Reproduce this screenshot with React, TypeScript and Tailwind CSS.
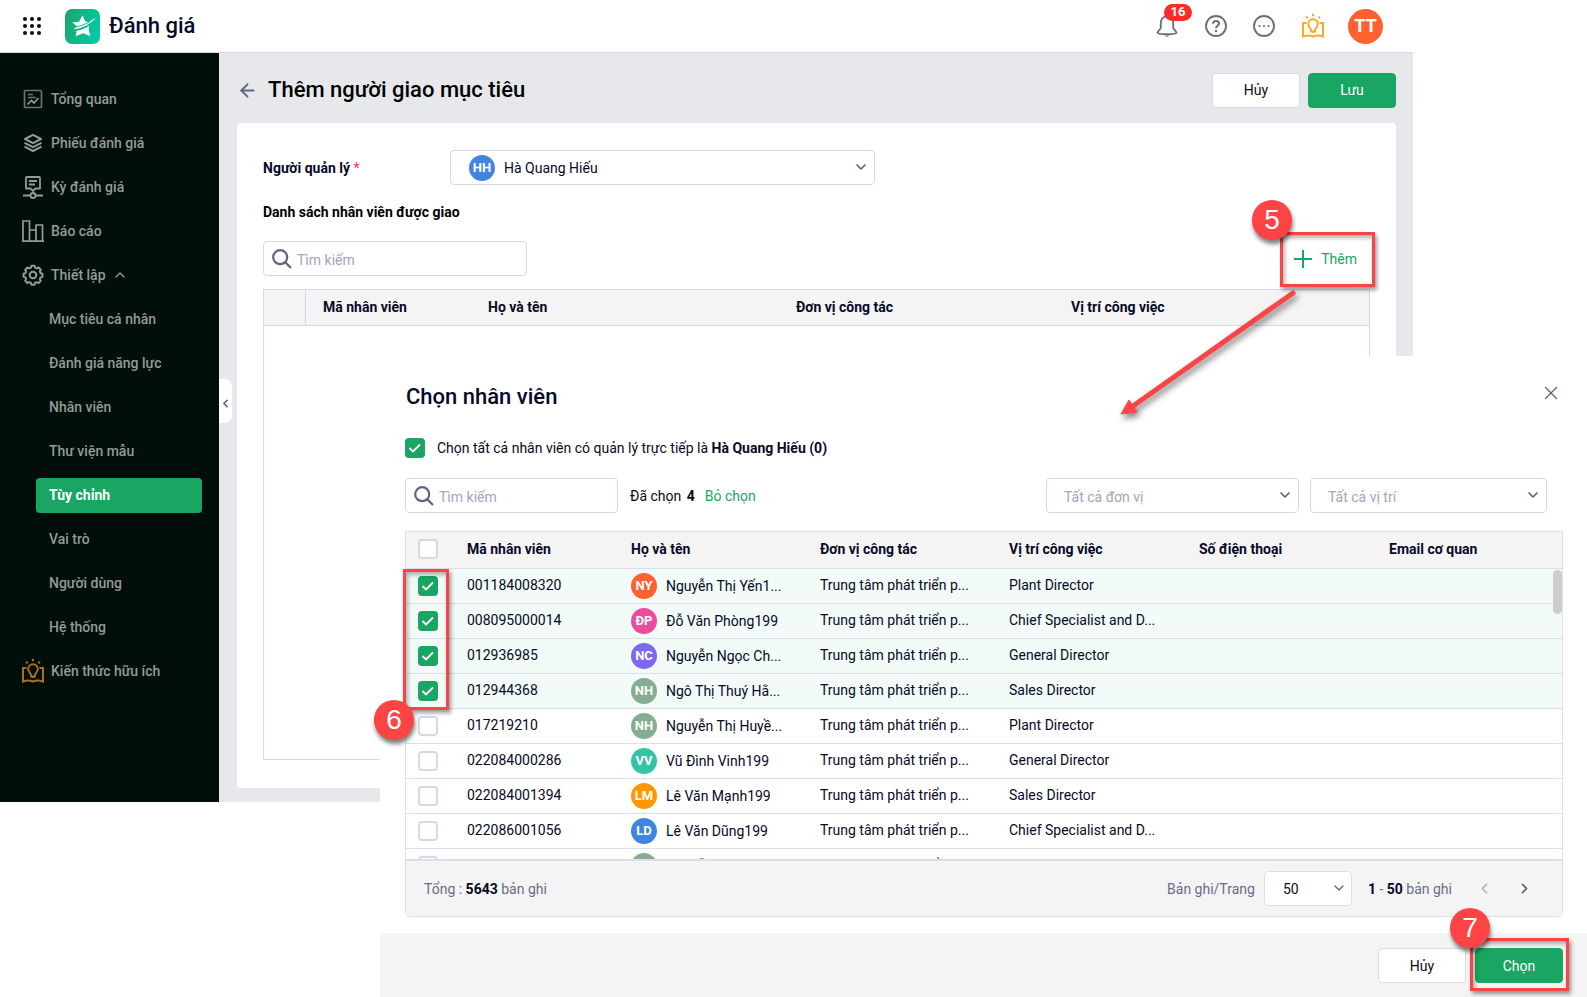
import type { ReactNode } from "react";
import { useState } from "react";
import { ArrowLeft, ChevronDown, ChevronLeft, ChevronRight, ChevronUp, X } from "lucide-react";
import clsx from "clsx";

type Employee = {
  code: string;
  name: string;
  initials: string;
  color: string;
  position: string;
};

const employees: Employee[] = [
  { code: "001184008320", name: "Nguyễn Thị Yến1...", initials: "NY", color: "bg-[#ff6230]", position: "Plant Director" },
  { code: "008095000014", name: "Đỗ Văn Phòng199", initials: "ĐP", color: "bg-[#ec4c9c]", position: "Chief Specialist and D..." },
  { code: "012936985", name: "Nguyễn Ngọc Ch...", initials: "NC", color: "bg-[#7b68ee]", position: "General Director" },
  { code: "012944368", name: "Ngô Thị Thuý Hằ...", initials: "NH", color: "bg-[#85ad93]", position: "Sales Director" },
  { code: "017219210", name: "Nguyễn Thị Huyề...", initials: "NH", color: "bg-[#85ad93]", position: "Plant Director" },
  { code: "022084000286", name: "Vũ Đình Vinh199", initials: "VV", color: "bg-[#35c3a7]", position: "General Director" },
  { code: "022084001394", name: "Lê Văn Mạnh199", initials: "LM", color: "bg-[#ff9800]", position: "Sales Director" },
  { code: "022086001056", name: "Lê Văn Dũng199", initials: "LD", color: "bg-[#4285e0]", position: "Chief Specialist and D..." },
  { code: "022086001057", name: "Nguyễn Hà199", initials: "NH", color: "bg-[#85ad93]", position: "Chief Specialist and D..." },
];

const settings = [
  "Mục tiêu cá nhân",
  "Đánh giá năng lực",
  "Nhân viên",
  "Thư viện mẫu",
  "Tùy chỉnh",
  "Vai trò",
  "Người dùng",
  "Hệ thống",
];

function AppsIcon() {
  return (
    <svg width="18" height="18" viewBox="0 0 18 18" fill="#0b0b14">
      {[2, 9, 16].map((y) => [2, 9, 16].map((x) => <circle key={`${x}-${y}`} cx={x} cy={y} r="2" />))}
    </svg>
  );
}

function Logo() {
  return (
    <svg width="35" height="35" viewBox="0 0 35 35">
      <defs>
        <linearGradient id="logo" x1="0" y1="0" x2="1" y2="0.4">
          <stop offset="0" stopColor="#1ba566" />
          <stop offset="1" stopColor="#04c8a3" />
        </linearGradient>
      </defs>
      <rect width="35" height="35" rx="7" fill="url(#logo)" />
      <path
        d="M7.3 13.300 14 12.800 17.500 6.300 20.300 12.600 23.500 12.900 31 8.800C25.500 14.800 18 19.500 8.700 20.200L12 17.500Z"
        fill="#fff"
      />
      <path d="M10.800 22C16.500 21.300 20.500 19.400 24.300 16.500L23.500 19 25.200 27 18.300 24.300 10.600 27.300 11.600 22.900Z" fill="#fff" />
      <path d="M8.500 17.900C15 17.900 21 14.800 25.500 12.200" fill="none" stroke="#12b384" strokeWidth="1" />
    </svg>
  );
}

function OverviewIcon() {
  return (
    <svg width="22" height="22" viewBox="0 0 22 22" fill="none" stroke="currentColor" strokeWidth="1.700">
      <rect x="2.500" y="2.500" width="17" height="17" rx="1" stroke="#66727e" />
      <path d="M6 6.500h5M6 9.500h8" stroke="#66727e" />
      <path d="m5.500 16.500 4-4 2.500 2.500 4.500-5" />
    </svg>
  );
}

function LayersIcon() {
  return (
    <svg width="22" height="22" viewBox="0 0 22 22" fill="none" stroke="currentColor" strokeWidth="2" strokeLinejoin="round">
      <path d="M11 2.800 19 7l-8 4.200L3 7Z" />
      <path d="m2.500 10.800 8.500 4.400 8.500-4.400M2.500 14.600l8.500 4.400 8.500-4.400" />
    </svg>
  );
}

function PeriodIcon() {
  return (
    <svg width="22" height="24" viewBox="0 0 22 24" fill="none" stroke="currentColor" strokeWidth="1.800" strokeLinejoin="round">
      <path d="M5 2h12a1 1 0 0 1 1 1v10.500h-4.500L11 16l-2.500-2.500H4V3a1 1 0 0 1 1-1Z" />
      <path d="M7 6h8M7 9.500h6M1 20.500h7M14 20.500h7" />
      <circle cx="11" cy="20.500" r="2.500" />
    </svg>
  );
}

function ReportIcon() {
  return (
    <svg width="22" height="22" viewBox="0 0 22 22" fill="none" stroke="currentColor" strokeWidth="1.700">
      <path d="M0 21.100h22M1 21V1h6.500v20M7.500 10h6.500v11M14 21V5h6.500v16" />
    </svg>
  );
}

function GearIcon() {
  return (
    <svg width="22" height="22" viewBox="0 0 24 24" fill="none" stroke="currentColor" strokeWidth="2.200" strokeLinejoin="round">
      <circle cx="12" cy="12" r="3.600" />
      <path d="M9.700 4 10.300 2h3.400l.6 2 1.900.8 1.900-1 2.400 2.400-1 1.900.8 1.900 2 .6v3.400l-2 .6-.8 1.900 1 1.900-2.400 2.400-1.900-1-1.900.8-.6 2h-3.400l-.6-2-1.900-.8-1.900 1-2.400-2.400 1-1.900-.8-1.900-2-.6v-3.400l2-.6.8-1.900-1-1.900 2.400-2.400 1.900 1Z" />
    </svg>
  );
}

function BookIcon({ className }: { className: string }) {
  return (
    <svg width="24" height="26" viewBox="0 0 24 26" fill="none" stroke="currentColor" strokeWidth="2" className={className}>
      <path d="M5.500 10H2v13.500c3-1.200 7-1.200 10 0 3-1.200 7-1.200 10 0V10h-3.500" />
      <path d="M10 17c0-1.500-2.800-2.600-2.800-6a4.800 4.800 0 0 1 9.600 0c0 3.400-2.800 4.500-2.800 6v1.500h-4Z" />
      <path d="M12 .8v2.500M5 3.800l1.700 1.500M19 3.800l-1.700 1.500M12 18v2" />
    </svg>
  );
}

function BellIcon() {
  return (
    <svg width="22" height="24" viewBox="0 0 22 24" fill="none" stroke="#6b7078" strokeWidth="1.900" strokeLinejoin="round">
      <path d="M11 2.500c-4 0-6.200 2.800-6.200 6.500v4.500c0 2-3.300 3.700-3.300 5.300 0 .9 2.500 1.500 9.500 1.500s9.500-.6 9.500-1.500c0-1.600-3.300-3.300-3.300-5.300V9c0-3.700-2.200-6.500-6.200-6.500Z" />
      <path d="M8.500 21.500c.8 1.500 4.200 1.500 5 0Z" fill="#6b7078" stroke="none" />
    </svg>
  );
}

function HelpIcon() {
  return (
    <svg width="22" height="22" viewBox="0 0 22 22" fill="none" stroke="#6b7078" strokeWidth="1.900">
      <circle cx="11" cy="11" r="10" />
      <path d="M8 8.800c0-1.700 1.300-2.800 3-2.800s3 1 3 2.600c0 2.100-3 2.100-3 4.600" strokeWidth="2" />
      <circle cx="11" cy="16" r="1.200" fill="#6b7078" stroke="none" />
    </svg>
  );
}

function MoreIcon() {
  return (
    <svg width="22" height="22" viewBox="0 0 22 22" fill="#6b7078">
      <circle cx="11" cy="11" r="10" fill="none" stroke="#6b7078" strokeWidth="1.900" />
      <circle cx="6.500" cy="11" r="1.100" />
      <circle cx="11" cy="11" r="1.100" />
      <circle cx="15.500" cy="11" r="1.100" />
    </svg>
  );
}

function SearchIcon() {
  return (
    <svg width="20" height="20" viewBox="0 0 20 20" fill="none" stroke="#5f6481" strokeWidth="2.200" className="shrink-0">
      <circle cx="8.200" cy="8.200" r="7" />
      <path d="m13 13 6 6" />
    </svg>
  );
}

function Avatar({ initials, color }: { initials: string; color: string }) {
  return (
    <span className={clsx("flex size-[26px] shrink-0 items-center justify-center rounded-full text-[13px] font-bold text-white", color)}>
      {initials}
    </span>
  );
}

function SearchBox({ label, className }: { label: string; className: string }) {
  return (
    <label className={clsx("flex h-[35px] items-center gap-[5px] rounded border border-[#d5d8e6] bg-white px-2", className)}>
      <SearchIcon />
      <input
        type="text"
        aria-label={label}
        placeholder="Tìm kiếm"
        className="w-full min-w-0 pt-0.5 outline-none placeholder:text-[#a2a6bd]"
      />
    </label>
  );
}

function Select({ label, className, children }: { label: string; className: string; children: ReactNode }) {
  return (
    <div className={clsx("relative", className)}>
      <select aria-label={label} className="h-[35px] w-full appearance-none rounded border border-[#d5d8e6] bg-white pl-[17px] pr-8 pt-0.5 outline-none">
        {children}
      </select>
      <ChevronDown size={16} strokeWidth={2.500} className="pointer-events-none absolute right-1.5 top-[9px] text-[#5f6481]" />
    </div>
  );
}

function Checkbox({ label, checked, onChange }: { label: string; checked: boolean; onChange?: () => void }) {
  return (
    <span className="relative block size-5 shrink-0">
      <input
        type="checkbox"
        aria-label={label}
        checked={checked}
        onChange={() => onChange?.()}
        className="block size-5 appearance-none rounded border-2 border-[#d5d8e6] bg-white checked:border-[#19a562] checked:bg-[#19a562]"
      />
      {checked && (
        <svg viewBox="0 0 20 20" fill="none" stroke="#fff" strokeWidth="1.800" className="pointer-events-none absolute inset-0">
          <path d="m4.500 10 3.500 3.500L15 6.500" />
        </svg>
      )}
    </span>
  );
}

function Button({ primary, children }: { primary?: boolean; children: ReactNode }) {
  return (
    <button
      type="button"
      className={clsx(
        "h-[35px] w-[88px] rounded border",
        primary ? "border-[#19a562] bg-[#19a562] text-white" : "border-[#dcdde2] bg-white text-[#0b0b14]",
      )}
    >
      {children}
    </button>
  );
}

function StepBadge({ step, className }: { step: number; className: string }) {
  return (
    <span className={clsx("absolute z-30 flex size-10 items-center justify-center rounded-full bg-[#fd4444] font-['Liberation_Sans'] text-[28px] text-white shadow-[1px_4px_4px_rgba(0,0,0,0.5)]", className)}>
      {step}
    </span>
  );
}

// Red frame around the element that a step points at
function StepFrame({ className }: { className: string }) {
  return (
    <span className={clsx("pointer-events-none absolute z-20 border-[3px] border-[#fd4444] shadow-[2px_3px_4px_rgba(0,0,0,0.4),inset_2px_3px_4px_rgba(0,0,0,0.3)]", className)} />
  );
}

function NavItem({ icon, children }: { icon: ReactNode; children: ReactNode }) {
  return (
    <a href="#" className="flex h-11 items-center gap-1.5 pl-[21px]">
      <span className="flex w-6 justify-center">{icon}</span>
      {children}
    </a>
  );
}

function Header() {
  return (
    <header className="flex h-[53px] items-center border-b border-[#d3d8e8] bg-white pl-[23px] pr-[30px]">
      <button type="button" aria-label="Ứng dụng">
        <AppsIcon />
      </button>
      <div className="ml-6 flex items-center gap-[9px]">
        <Logo />
        <span className="text-[22px] font-medium">Đánh giá</span>
      </div>
      <div className="ml-auto flex items-center">
        <button type="button" aria-label="Thông báo" className="relative">
          <BellIcon />
          <span className="absolute -top-[10px] left-2 flex h-[17px] w-7 items-center justify-center rounded-full bg-[#ff2a2a] text-[13px] font-bold text-white">
            16
          </span>
        </button>
        <button type="button" aria-label="Trợ giúp" className="ml-[27px]">
          <HelpIcon />
        </button>
        <button type="button" aria-label="Thêm nữa" className="ml-[26px]">
          <MoreIcon />
        </button>
        <button type="button" aria-label="Kiến thức" className="ml-[26px]">
          <BookIcon className="text-[#fda92b]" />
        </button>
        <span className="ml-[23px] flex size-[35px] items-center justify-center rounded-full bg-[#ff6230] text-lg font-bold text-white">
          TT
        </span>
      </div>
    </header>
  );
}

function Sidebar() {
  return (
    <nav className="relative w-[219px] shrink-0 bg-[#010e09] pb-[108px] pt-6 font-medium text-[#949a97]">
      <NavItem icon={<OverviewIcon />}>Tổng quan</NavItem>
      <NavItem icon={<LayersIcon />}>Phiếu đánh giá</NavItem>
      <NavItem icon={<PeriodIcon />}>Kỳ đánh giá</NavItem>
      <NavItem icon={<ReportIcon />}>Báo cáo</NavItem>
      <NavItem icon={<GearIcon />}>
        Thiết lập
        <ChevronUp size={16} strokeWidth={2} />
      </NavItem>
      {settings.map((item) => (
        <div key={item} className="flex h-11 items-center pl-9 pr-[17px]">
          <a
            href="#"
            className={clsx("flex h-[35px] w-full items-center rounded pl-[13px]", item === "Tùy chỉnh" && "bg-[#19a562] font-bold text-white")}
          >
            {item}
          </a>
        </div>
      ))}
      <NavItem icon={<BookIcon className="text-[#a86f1c]" />}>Kiến thức hữu ích</NavItem>
      <button
        type="button"
        aria-label="Thu gọn"
        className="absolute -right-[13px] top-[326px] flex h-11 w-[13px] items-center justify-center rounded-r-lg bg-white pt-1 text-[#5f6481]"
      >
        <ChevronLeft size={13} strokeWidth={3} />
      </button>
    </nav>
  );
}

function GoalForm() {
  return (
    <main className="min-w-0 flex-1 bg-[#e7e8ec] pb-3.5 pl-[18px] pr-[17px]">
      <div className="flex h-[70px] items-center pt-1">
        <button type="button" aria-label="Quay lại" className="text-[#5f6481]">
          <ArrowLeft size={21} strokeWidth={2.200} />
        </button>
        <h1 className="ml-2.5 text-[22px] font-medium text-black">Thêm người giao mục tiêu</h1>
        <div className="ml-auto flex gap-2">
          <Button>Hủy</Button>
          <Button primary>Lưu</Button>
        </div>
      </div>

      <div className="rounded bg-white px-[26px] pb-7 pt-[27px]">
        <div className="flex items-center">
          <label htmlFor="manager" className="w-[187px] font-bold">
            Người quản lý <span className="font-normal text-[#f0384b]">*</span>
          </label>
          <div className="relative w-[425px]">
            <select id="manager" className="h-[35px] w-full appearance-none rounded border border-[#d5d8e6] bg-white pl-[53px] outline-none">
              <option>Hà Quang Hiếu</option>
            </select>
            <span className="pointer-events-none absolute left-[19px] top-[5px]">
              <Avatar initials="HH" color="bg-[#4285e0]" />
            </span>
            <ChevronDown size={16} strokeWidth={2.500} className="pointer-events-none absolute right-1.5 top-[9px] text-[#5f6481]" />
          </div>
        </div>

        <h2 className="mt-[17px] font-bold text-black">Danh sách nhân viên được giao</h2>

        <div className="mt-[19px] flex items-center justify-between">
          <SearchBox label="Tìm nhân viên được giao" className="w-[264px]" />
          <div className="relative">
            <button type="button" className="flex h-[35px] items-center gap-[9px] pr-[13px] text-[#19a562]">
              <svg width="18" height="18" viewBox="0 0 18 18" stroke="currentColor" strokeWidth="2">
                <path d="M9 0v18M0 9h18" />
              </svg>
              Thêm
            </button>
            <StepFrame className="-right-[5px] -top-[9px] h-[55px] w-[95px]" />
            <StepBadge step={5} className="-top-[41px] right-[78px]" />
            {/* Arrow down to the dialog */}
            <svg
              width="200"
              height="150"
              viewBox="0 0 200 150"
              className="pointer-events-none absolute right-[60px] top-[40px] z-20 drop-shadow-[2px_4px_3px_rgba(0,0,0,0.5)]"
            >
              <path d="M183 12 23 125" stroke="#fd4444" strokeWidth="5" strokeLinecap="round" />
              <path d="M11 133 19 119 27 131Z" fill="#fd4444" stroke="#fd4444" />
            </svg>
          </div>
        </div>

        <div className="mt-[13px] min-h-[471px] border border-[#d5d8e6]">
          <table className="w-full table-fixed border-separate border-spacing-0 text-left">
            <colgroup>
              <col className="w-[42px]" />
              <col className="w-[165px]" />
              <col className="w-[308px]" />
              <col className="w-[275px]" />
              <col />
            </colgroup>
            <thead className="bg-[#f4f4f4]">
              <tr className="h-9">
                <th aria-label="Chọn" className="border-b border-r border-[#d5d8e6]" />
                {["Mã nhân viên", "Họ và tên", "Đơn vị công tác", "Vị trí công việc"].map((title) => (
                  <th key={title} className="border-b border-[#d5d8e6] pb-0.5 pl-[17px] font-bold">
                    {title}
                  </th>
                ))}
              </tr>
            </thead>
          </table>
        </div>
      </div>
    </main>
  );
}

function EmployeeDialog() {
  const [selected, setSelected] = useState(employees.slice(0, 4).map((employee) => employee.code));
  const [all, setAll] = useState(true);

  const toggle = (code: string) =>
    setSelected((codes) => (codes.includes(code) ? codes.filter((item) => item !== code) : [...codes, code]));

  return (
    <section role="dialog" aria-labelledby="dialog-title" className="absolute bottom-0 left-[380px] right-0 top-[356px] z-10 flex flex-col bg-white">
      <div className="flex items-start justify-between pl-[26px] pr-[25px] pt-6">
        <h2 id="dialog-title" className="pt-px text-[22px] font-medium leading-8">
          Chọn nhân viên
        </h2>
        <button type="button" aria-label="Đóng" className="pt-0.5 text-[#5f6481]">
          <X size={22} strokeWidth={1.500} />
        </button>
      </div>

      <div className="mt-[25px] flex items-center gap-3 pl-[25px]">
        <Checkbox label="Chọn tất cả nhân viên" checked={all} onChange={() => setAll(!all)} />
        <p>
          Chọn tất cả nhân viên có quản lý trực tiếp là <strong className="font-bold">Hà Quang Hiếu (0)</strong>
        </p>
      </div>

      <div className="mt-5 flex items-center pl-[25px] pr-10">
        <SearchBox label="Tìm nhân viên" className="w-[213px]" />
        <span className="ml-3">
          Đã chọn <strong className="ml-0.5 font-bold">{selected.length}</strong>
        </span>
        <button type="button" className="ml-2.5 text-[#19a562]" onClick={() => setSelected([])}>
          Bỏ chọn
        </button>
        <div className="ml-auto flex gap-[11px] text-[#a2a6bd]">
          <Select label="Đơn vị" className="w-[253px]">
            <option>Tất cả đơn vị</option>
          </Select>
          <Select label="Vị trí" className="w-[237px]">
            <option>Tất cả vị trí</option>
          </Select>
        </div>
      </div>

      <div className="relative mb-4 ml-[25px] mr-6 mt-[18px] flex min-h-0 flex-1 flex-col rounded-b border border-[#dcdfeb]">
        <div className="min-h-0 flex-1 overflow-hidden">
          <table className="w-full table-fixed border-separate border-spacing-0 text-left">
            <colgroup>
              <col className="w-[45px]" />
              <col className="w-[164px]" />
              <col className="w-[189px]" />
              <col className="w-[189px]" />
              <col className="w-[190px]" />
              <col className="w-[190px]" />
              <col />
            </colgroup>
            <thead className="bg-[#f4f4f4]">
              <tr className="h-[37px]">
                <th className="border-b border-[#dcdfeb] pb-0.5 pl-3">
                  <Checkbox label="Chọn trang này" checked={false} />
                </th>
                {["Mã nhân viên", "Họ và tên", "Đơn vị công tác", "Vị trí công việc", "Số điện thoại", "Email cơ quan"].map((title) => (
                  <th key={title} className="border-b border-[#dcdfeb] pb-0.5 pl-4 font-bold">
                    {title}
                  </th>
                ))}
              </tr>
            </thead>
            <tbody>
              {employees.map((employee) => (
                <tr
                  key={employee.code}
                  className={clsx("h-[35px] *:border-b *:border-[#dcdfeb]", selected.includes(employee.code) && "bg-[#f2fbf7]")}
                >
                  <td className="pl-3">
                    <Checkbox label={employee.name} checked={selected.includes(employee.code)} onChange={() => toggle(employee.code)} />
                  </td>
                  <td className="pb-0.5 pl-4">{employee.code}</td>
                  <td className="pl-4">
                    <span className="flex items-center gap-[9px]">
                      <Avatar initials={employee.initials} color={employee.color} />
                      {employee.name}
                    </span>
                  </td>
                  <td className="pb-0.5 pl-4">Trung tâm phát triển p...</td>
                  <td className="pb-0.5 pl-4">{employee.position}</td>
                  <td />
                  <td />
                </tr>
              ))}
            </tbody>
          </table>
        </div>
        <span className="absolute right-0 top-[38px] h-11 w-[9px] rounded-full bg-[#cccecd]" />

        <div className="flex h-[57px] shrink-0 items-center rounded-b border-t-2 border-[#dcdfeb] bg-[#f4f4f4] pl-[18px] pr-[29px] text-[#696d87]">
          <span>
            Tổng : <strong className="font-bold text-[#060a28]">5643</strong> bản ghi
          </span>
          <label htmlFor="page-size" className="ml-auto">
            Bản ghi/Trang
          </label>
          <div className="relative ml-[9px] w-[88px]">
            <select id="page-size" className="h-[35px] w-full appearance-none rounded border border-[#dcdfeb] bg-white pl-[18px] text-[#0b0b14] outline-none">
              <option>50</option>
            </select>
            <ChevronDown size={16} strokeWidth={2} className="pointer-events-none absolute right-[5px] top-[9px] text-[#5f6481]" />
          </div>
          <span className="ml-4">
            <strong className="font-bold text-[#060a28]">1</strong> - <strong className="font-bold text-[#060a28]">50</strong> bản ghi
          </span>
          <button type="button" aria-label="Trang trước" className="ml-6 text-[#a9acba]">
            <ChevronLeft size={17} strokeWidth={2} />
          </button>
          <button type="button" aria-label="Trang sau" className="ml-[23px] text-[#4d5168]">
            <ChevronRight size={17} strokeWidth={2} />
          </button>
        </div>

        <StepFrame className="-left-[3px] top-[37px] h-[141px] w-[46px]" />
        <StepBadge step={6} className="-left-[32px] top-[168px]" />
      </div>

      <footer className="flex h-16 shrink-0 items-start justify-end gap-[9px] bg-[#f4f4f4] pr-6 pt-[15px]">
        <Button>Hủy</Button>
        <div className="relative">
          <Button primary>Chọn</Button>
          <StepFrame className="-left-[5px] -top-[10px] h-[53px] w-[99px]" />
          <StepBadge step={7} className="-left-[25px] -top-[40px]" />
        </div>
      </footer>
    </section>
  );
}

export default function App() {
  return (
    <div className="relative min-h-screen overflow-hidden bg-white font-['Roboto',sans-serif] text-sm text-[#060a28]">
      <div className="mr-[174px]">
        <Header />
        <div className="flex">
          <Sidebar />
          <GoalForm />
        </div>
      </div>
      <EmployeeDialog />
    </div>
  );
}
